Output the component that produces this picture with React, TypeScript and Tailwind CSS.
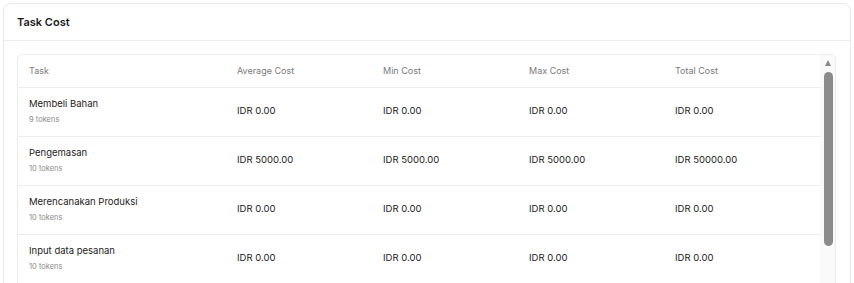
import React from "react";

type Row = {
  task: string;
  tokens: number;
  average: string;
  min: string;
  max: string;
  total: string;
};

const rows: Row[] = [
  { task: "Membeli Bahan", tokens: 9, average: "IDR 0.00", min: "IDR 0.00", max: "IDR 0.00", total: "IDR 0.00" },
  { task: "Pengemasan", tokens: 10, average: "IDR 5000.00", min: "IDR 5000.00", max: "IDR 5000.00", total: "IDR 50000.00" },
  { task: "Merencanakan Produksi", tokens: 10, average: "IDR 0.00", min: "IDR 0.00", max: "IDR 0.00", total: "IDR 0.00" },
  { task: "Input data pesanan", tokens: 10, average: "IDR 0.00", min: "IDR 0.00", max: "IDR 0.00", total: "IDR 0.00" },
];

// fake scrollbar, drawn since headless chrome uses overlay scrollbars
const ScrollBar = () => (
  <div className="flex w-[15px] shrink-0 flex-col items-center self-stretch bg-[#fafafa] pt-[5px]">
    <div className="h-0 w-0 border-x-[3.5px] border-b-[6px] border-x-transparent border-b-[#8a8a8a]" />
    <div className="ml-px mt-[6px] h-[174px] w-[9px] rounded-full bg-[#8c8c8c]" />
  </div>
);

const App = () => {
  return (
    <div className="h-[283px] overflow-hidden bg-white p-[3px] font-['Inter',sans-serif]">
      <section className="rounded-lg border border-[#e7e7e7] bg-white">
        <header className="flex h-[37px] items-center border-b border-[#ececec] px-[13px]">
          <h2 className="text-[11px] font-semibold text-[#1a1a1a]">Task Cost</h2>
        </header>

        <div className="pl-[13px] pr-[14px] pt-[13px]">
          <div className="flex h-[300px] items-start overflow-hidden rounded-md border border-[#ececec]">
            <div className="min-w-0 flex-1">
              <table className="w-full table-fixed border-collapse text-left">
                <thead>
                  <tr className="h-[32px] border-b border-[#ececec]">
                    <th className="w-[208px] px-[11px] text-[9px] font-normal text-[#7a7a7a]">Task</th>
                    <th className="w-[146px] px-[11px] text-[9px] font-normal text-[#7a7a7a]">Average Cost</th>
                    <th className="w-[146px] px-[11px] text-[9px] font-normal text-[#7a7a7a]">Min Cost</th>
                    <th className="w-[146px] px-[11px] text-[9px] font-normal text-[#7a7a7a]">Max Cost</th>
                    <th className="px-[11px] text-[9px] font-normal text-[#7a7a7a]">Total Cost</th>
                  </tr>
                </thead>
                <tbody>
                  {rows.map(row => (
                    <tr key={row.task} className="h-[49px] border-b border-[#ececec]">
                      <td className="px-[11px]">
                        <div className="text-[9.5px] leading-[12px] text-[#222]">{row.task}</div>
                        <div className="mt-[4px] text-[7.5px] leading-[12px] text-[#8a8a8a]">{row.tokens} tokens</div>
                      </td>
                      <td className="px-[11px] text-[9.5px] text-[#222]">{row.average}</td>
                      <td className="px-[11px] text-[9.5px] text-[#222]">{row.min}</td>
                      <td className="px-[11px] text-[9.5px] text-[#222]">{row.max}</td>
                      <td className="px-[11px] text-[9.5px] text-[#222]">{row.total}</td>
                    </tr>
                  ))}
                </tbody>
              </table>
            </div>
            <ScrollBar />
          </div>
        </div>
      </section>
    </div>
  );
};

export default App;
